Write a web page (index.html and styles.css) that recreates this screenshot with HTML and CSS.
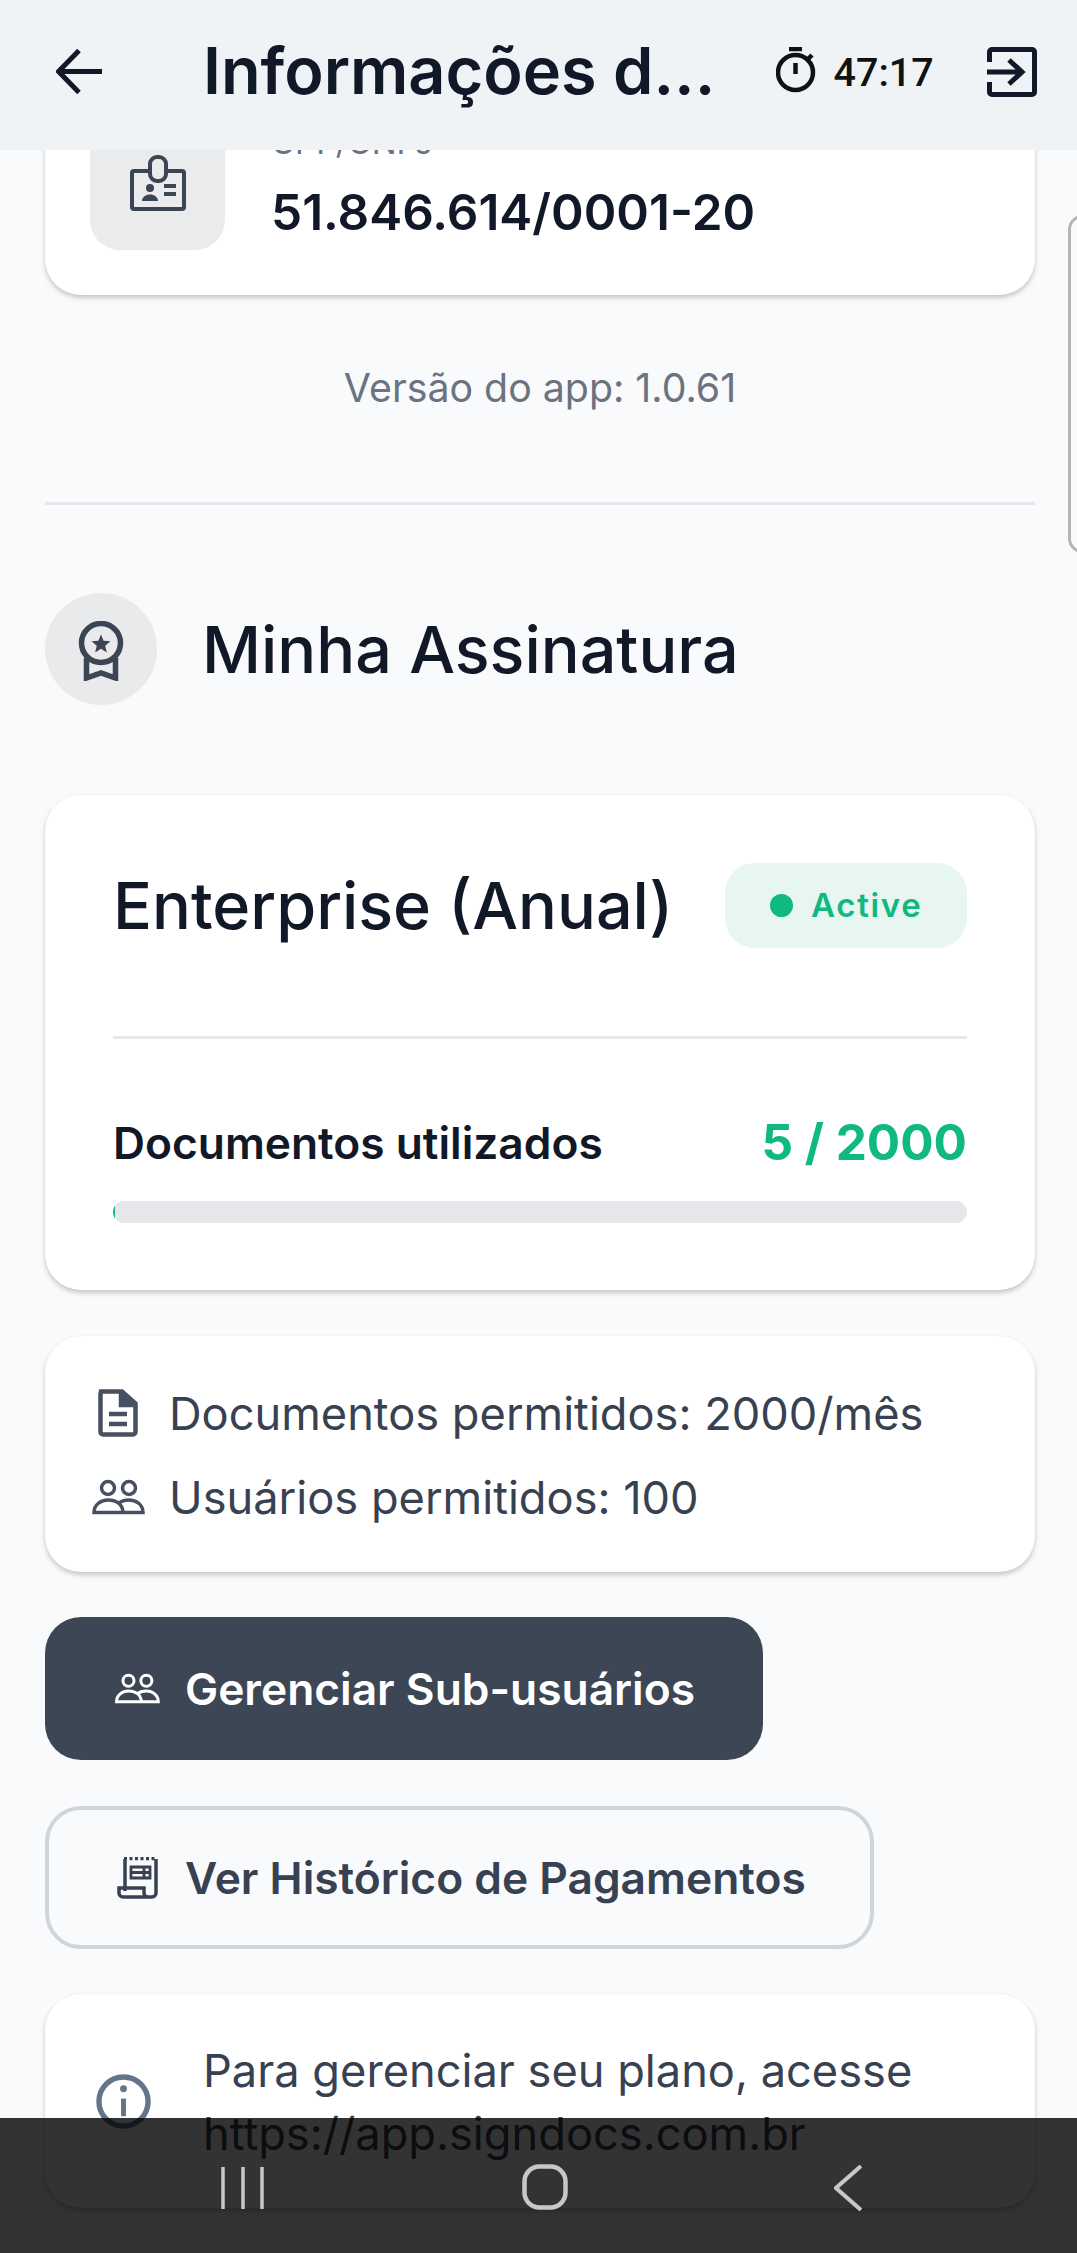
FILE: index.html
```html
<!DOCTYPE html>
<html lang="pt-BR">
<head>
<meta charset="utf-8">
<title>Informações da conta</title>
<link rel="stylesheet" href="styles.css">
</head>
<body>
<div class="screen">
  <header class="topbar">
    <svg class="ic-back" viewBox="0 0 46 46" fill="none" stroke="#111827" stroke-width="5"><path d="M46 22.5H3M23 1.5 2.5 22.5 23 43.5"/></svg>
    <h1 class="topbar-title">Informações d...</h1>
    <div class="timer">
      <svg class="ic-timer" viewBox="0 0 40 46" fill="none" stroke="#111" stroke-width="4.5"><circle cx="19.5" cy="25.5" r="17.5"/><path d="M13 2h13M19.5 16v11M32 12l4-4"/></svg>
      <span class="timer-text">47:17</span>
    </div>
    <svg class="ic-exit" viewBox="0 0 50 50" fill="none" stroke="#111827" stroke-width="5"><path d="M2.5 15V5a2.500 2.500 0 0 1 2.500-2.500h40a2.500 2.500 0 0 1 2.500 2.500v40a2.500 2.500 0 0 1-2.500 2.500H5A2.500 2.500 0 0 1 2.500 45V35"/><path d="M0 25h35M22 13l13 12-13 12"/></svg>
  </header>
  <main class="content">
    <section class="card card-doc">
      <div class="doc-icon">
        <svg class="ic-id" viewBox="0 0 56 56" fill="none" stroke="#3b4554" stroke-width="4"><rect x="2" y="16" width="52" height="38" rx="2"/><rect x="20" y="2" width="16" height="24" rx="7" fill="#e9ebed"/><circle cx="20" cy="33" r="4" fill="#3b4554" stroke="none"/><path d="M12 46c0-4 4-6.500 8-6.500s8 2.500 8 6.500z" fill="#3b4554" stroke="none"/><path d="M34 31h12M34 39h12"/></svg>
      </div>
      <div class="doc-text">
        <div class="doc-label">CPF/CNPJ</div>
        <div class="doc-value">51.846.614/0001-20</div>
      </div>
    </section>
    <p class="version">Versão do app: 1.0.61</p>
    <hr class="rule">
    <div class="section-head">
      <span class="section-icon">
        <svg class="ic-medal" viewBox="0 0 46 60" fill="none" stroke="#3b4554"><circle cx="23" cy="22" r="19.500" stroke-width="5.500"/><path d="m23 13.500 2.600 6.300 6.800.5-5.200 4.400 1.700 6.700-5.900-3.600-5.900 3.600 1.700-6.700-5.200-4.400 6.800-.5z" fill="#3b4554" stroke="none"/><path d="M8.500 37v20l14.500-5 14.500 5V37" stroke-width="5.500"/></svg>
      </span>
      <h2 class="section-title">Minha Assinatura</h2>
    </div>
    <section class="card card-plan">
      <div class="plan-top">
        <h3 class="plan-name">Enterprise (Anual)</h3>
        <span class="badge"><i class="badge-dot"></i><span class="badge-text">Active</span></span>
      </div>
      <hr class="rule rule-plan">
      <div class="usage">
        <span class="usage-label">Documentos utilizados</span>
        <span class="usage-value">5 / 2000</span>
      </div>
      <div class="track"><div class="fill" style="width:0.25%"></div></div>
    </section>
    <section class="card card-limits">
      <div class="limit">
        <svg class="ic-limit" viewBox="0 0 54 48" fill="none" stroke="#475061" stroke-width="4.500"><path d="M10 2.500h21l13.500 12V43a2.500 2.500 0 0 1-2.500 2.500H12A2.500 2.500 0 0 1 9.500 43V5z"/><path d="M30 2v14h14" fill="#475061"/><path d="M18 25h18M18 35h18"/></svg>
        <span>Documentos permitidos: 2000/mês</span>
      </div>
      <div class="limit">
        <svg class="ic-limit" viewBox="0 0 54 36" fill="none" stroke="#475061" stroke-width="3.500"><circle cx="17" cy="9" r="6.500"/><circle cx="38" cy="9" r="6.500"/><path d="M3 33.500c0-8 7-12.500 14-12.500 8 0 15 4 15 12.500zM32 33.500h20c0-8-7-12.500-14-12.500-4 0-8 1.200-11 3.500"/></svg>
        <span>Usuários permitidos: 100</span>
      </div>
    </section>
    <button class="btn btn-solid" type="button">
      <svg class="ic-btn" viewBox="0 0 54 36" fill="none" stroke="#fff" stroke-width="3.500"><circle cx="17" cy="9" r="6.500"/><circle cx="38" cy="9" r="6.500"/><path d="M3 33.500c0-8 7-12.500 14-12.500 8 0 15 4 15 12.500zM32 33.500h20c0-8-7-12.500-14-12.500-4 0-8 1.200-11 3.500"/></svg>
      <span>Gerenciar Sub-usuários</span>
    </button>
    <button class="btn btn-outline" type="button">
      <svg class="ic-btn ic-receipt" viewBox="0 0 46 42" fill="none" stroke="#374151" stroke-width="3.500"><path d="M11 2v32M42 2v34a4 4 0 0 1-4 4H9a4 4 0 0 1-4-4v-5h25v5a4 4 0 0 0 4 4"/><path d="M10 1.500h33" stroke-dasharray="3 2.500"/><path d="M17 10h19v11H17zM17 15.500h19M30 10v11" stroke-width="2.800"/></svg>
      <span>Ver Histórico de Pagamentos</span>
    </button>
    <section class="card card-note">
      <svg class="ic-info" viewBox="0 0 56 56" fill="none" stroke="#64748b"><circle cx="28" cy="28" r="25" stroke-width="5.500"/><path d="M28 25v18" stroke-width="5"/><circle cx="28" cy="15" r="3.500" fill="#64748b" stroke="none"/></svg>
      <p class="note-text">Para gerenciar seu plano, acesse https://app.signdocs.com.br</p>
    </section>
  </main>
  <div class="edge-handle"></div>
  <nav class="sysnav">
    <svg class="ic-recents" viewBox="0 0 44 42" fill="none" stroke="#c8c8c8" stroke-width="3.500"><path d="M2 0v42M22 0v42M41 0v42"/></svg>
    <svg class="ic-home" viewBox="0 0 46 46" fill="none" stroke="#c8c8c8" stroke-width="4.500"><rect x="2.500" y="2.500" width="41" height="41" rx="15"/></svg>
    <svg class="ic-chev" viewBox="0 0 28 46" fill="none" stroke="#c8c8c8" stroke-width="4"><path d="M27 1 2 23l25 22"/></svg>
  </nav>
</div>
</body>
</html>
```

FILE: styles.css
```css
* { box-sizing: border-box; }
html, body { margin: 0; padding: 0; }
body { font-family: "Inter", "Liberation Sans", sans-serif; background: #f9fafb; }
h1, h2, h3, p { margin: 0; font-weight: inherit; }
svg { display: block; flex: none; }

.screen { position: relative; width: 1077px; height: 2253px; overflow: hidden; display: flex; flex-direction: column; background: #f9fafb; }

.topbar { position: relative; z-index: 2; flex: none; height: 150px; background: #eff3f6; display: flex; align-items: center; padding: 0 40px 6px 56px; }
.ic-back { width: 46px; height: 46px; }
.topbar-title { margin-left: 101px; font-size: 64.8px; line-height: 78px; margin-top: -3px; font-weight: 600; color: #111827; white-space: nowrap; width: 574px; }
.timer { display: flex; align-items: center; gap: 18px; width: 212px; }
.ic-timer { width: 40px; height: 46px; margin-top: -4px; }
.timer-text { font-family: "Roboto", sans-serif; font-size: 39.5px; font-weight: 500; color: #111; }
.ic-exit { width: 50px; height: 50px; }

.content { flex: 1; min-height: 0; overflow: hidden; display: flex; flex-direction: column; align-items: stretch; padding: 0 42px 0 45px; }

.card { background: #fff; border-radius: 36px; box-shadow: 0 3px 5px rgba(0,0,0,.2), 0 0 2px rgba(0,0,0,.04); }

.card-doc { flex: none; margin-top: -80px; padding: 45px; display: flex; gap: 46px; align-items: center; }
.doc-icon { width: 135px; height: 135px; border-radius: 30px; background: #e9ebed; display: flex; align-items: center; justify-content: center; }
.ic-id { width: 56px; height: 56px; }
.doc-text { margin-top: -3px; }
.doc-label { font-size: 33px; line-height: 45px; color: #6b7280; }
.doc-value { font-size: 49.5px; line-height: 60px; font-weight: 600; color: #111827; margin-top: 17px; }

.version { margin-top: 71px; text-align: center; font-size: 39.3px; line-height: 44px; color: #6b7280; }
.rule { flex: none; margin: 92px 0 0; height: 3px; border: 0; background: #e5e7eb; }

.section-head { margin-top: 88px; display: flex; align-items: center; gap: 45px; }
.section-icon { width: 112px; height: 112px; border-radius: 50%; background: #e8eaec; display: flex; align-items: center; justify-content: center; }
.ic-medal { width: 46px; height: 60px; margin-top: 4px; }
.section-title { font-size: 64.7px; font-weight: 500; color: #111827; }

.card-plan { flex: none; margin-top: 90px; padding: 68px 68px 67px; }
.plan-top { display: flex; align-items: center; justify-content: space-between; }
.plan-name { font-size: 64.7px; font-weight: 500; color: #111827; }
.badge { display: flex; align-items: center; gap: 18px; height: 85px; width: 242px; padding-left: 45px; border-radius: 30px; background: #e7f6f0; color: #10b981; font-size: 33px; font-weight: 600; letter-spacing: 1.7px; }
.badge-dot { width: 23px; height: 23px; border-radius: 50%; background: #10b981; }
.badge-text { margin-top: -2px; }
.rule-plan { margin-top: 88px; }
.usage { margin-top: 74px; height: 58px; display: flex; align-items: center; justify-content: space-between; }
.usage-label { font-size: 44.3px; font-weight: 600; color: #111827; margin-top: 2px; }
.usage-value { font-size: 49.5px; font-weight: 700; color: #10b981; margin-top: -1px; }
.track { margin-top: 30px; height: 22px; border-radius: 11px; background: #e5e7eb; overflow: hidden; }
.fill { height: 100%; background: #10b981; }

.card-limits { flex: none; margin-top: 46px; padding: 47px 46px 45px; display: flex; flex-direction: column; gap: 24px; }
.limit { height: 60px; display: flex; align-items: center; gap: 24px; font-size: 45.2px; color: #374151; }
.ic-limit { width: 54px; height: 48px; }

.btn { flex: none; align-self: flex-start; display: flex; align-items: center; gap: 25px; height: 143px; border-radius: 36px; font-family: inherit; font-size: 44.3px; font-weight: 600; cursor: pointer; }
.btn-solid { margin-top: 45px; width: 718px; padding: 0 0 0 69px; border: 0; background: #3c4654; color: #fff; }
.btn-outline { margin-top: 46px; width: 829px; padding: 0 0 0 65px; border: 4px solid #d1d5db; background: transparent; color: #374151; }
.ic-btn { width: 46px; height: 31px; }
.ic-receipt { height: 42px; }

.card-note { flex: none; margin-top: 45px; height: 214px; padding: 0 40px 0 51px; display: flex; align-items: center; gap: 52px; }
.ic-info { width: 55px; height: 55px; }
.note-text { font-size: 45.2px; line-height: 63px; color: #374151; margin-top: 1px; }

.edge-handle { position: absolute; top: 215px; right: -20px; width: 29px; height: 338px; border: 3px solid #b4b4b4; border-radius: 15px; }

.sysnav { position: absolute; z-index: 3; left: 0; right: 0; bottom: 0; height: 135px; background: rgba(0,0,0,.8); }
.sysnav svg { position: absolute; }
.ic-recents { left: 221px; top: 49px; width: 44px; height: 42px; }
.ic-home { left: 522px; top: 46px; width: 46px; height: 46px; }
.ic-chev { left: 834px; top: 47px; width: 28px; height: 46px; }
```
